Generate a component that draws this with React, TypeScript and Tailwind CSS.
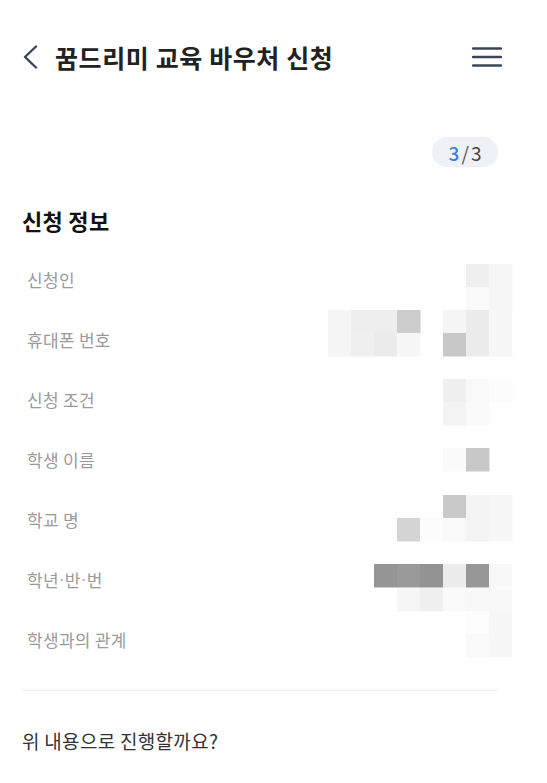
import React from "react"

const font = { fontFamily: '"Noto Sans CJK KR", "Noto Sans", sans-serif' }

const labels = ["신청인", "휴대폰 번호", "신청 조건", "학생 이름", "학교 명", "학년·반·번", "학생과의 관계"]

// redaction mosaic: [y, column, colour]
const cols = [328, 351, 374, 397, 420, 443, 466, 489]
const mosaic: [number, number, string][] = [
  [264, 6, "#efefef"], [264, 7, "#f6f6f6"],
  [287, 6, "#f9f9f9"], [287, 7, "#f6f6f6"],
  [310, 0, "#f5f5f5"], [310, 1, "#eeeeee"], [310, 2, "#eeeeee"], [310, 3, "#cccccc"], [310, 5, "#f5f5f5"], [310, 6, "#ececec"], [310, 7, "#f7f7f7"],
  [333, 0, "#f5f5f5"], [333, 1, "#efefef"], [333, 2, "#ebebeb"], [333, 3, "#f7f7f7"], [333, 5, "#c8c8c8"], [333, 6, "#ececec"], [333, 7, "#f7f7f7"],
  [379, 5, "#efefef"], [379, 6, "#f9f9f9"], [379, 7, "#fcfcfc"],
  [402, 5, "#f3f3f3"], [402, 6, "#fafafa"],
  [448, 5, "#fafafa"], [448, 6, "#c8c8c8"],
  [495, 5, "#c9c9c9"], [495, 6, "#f4f4f4"], [495, 7, "#f6f6f6"],
  [518, 3, "#d4d4d4"], [518, 4, "#fcfcfc"], [518, 5, "#f9f9f9"], [518, 6, "#f4f4f4"], [518, 7, "#f6f6f6"],
  [564, 2, "#959595"], [564, 3, "#9a9a9a"], [564, 4, "#939393"], [564, 5, "#ececec"], [564, 6, "#979797"], [564, 7, "#f8f8f8"],
  [588, 3, "#f6f6f6"], [588, 4, "#f0f0f0"], [588, 5, "#f9f9f9"], [588, 6, "#f8f8f8"], [588, 7, "#f8f8f8"],
  [611, 6, "#fdfdfd"], [611, 7, "#f7f7f7"],
  [634, 6, "#f9f9f9"], [634, 7, "#f7f7f7"],
]

function Mosaic() {
  return (
    <svg className="pointer-events-none absolute left-0 top-0" width={547} height={783}>
      {mosaic.map(([y, c, fill], i) => (
        <rect key={i} x={cols[c]} y={y} width={23.5} height={23.5} fill={fill} />
      ))}
    </svg>
  )
}

function Label({ text }: { text: string }) {
  const parts = text.split("·")
  return (
    <>
      {parts.map((p, i) => (
        <React.Fragment key={i}>
          {i > 0 && <span className="font-['Liberation_Sans']">·</span>}
          {p}
        </React.Fragment>
      ))}
    </>
  )
}

export default function App() {
  return (
    <div className="relative min-h-[783px] w-[547px] overflow-hidden bg-white" style={font}>
      {/* Header */}
      <header className="flex h-[114px] items-center justify-between pl-[22px] pr-[45px]">
        <div className="flex items-center gap-[17px]">
          <svg width="16" height="24" viewBox="0 0 16 24" fill="none">
            <path d="M14 1.5 L3 12 L14 22.5" stroke="#3a4255" strokeWidth="2.4" strokeLinecap="round" strokeLinejoin="round" />
          </svg>
          <h1 className="text-[25px] font-bold leading-[32px] tracking-[0.6px] text-[#222]">꿈드리미 교육 바우처 신청</h1>
        </div>
        <svg width="30" height="22" viewBox="0 0 30 22" fill="none">
          <path d="M1 2.5 H29 M1 11 H29 M1 19.5 H29" stroke="#3c4558" strokeWidth="2.4" strokeLinecap="round" />
        </svg>
      </header>

      <main className="pl-[22px] pr-[49px]">
        <div className="mt-[23px] flex justify-end">
          <span className="flex h-[30px] w-[66px] items-center justify-center rounded-full bg-[#eef1f6] text-[19px] leading-none">
            <span className="font-medium text-[#3b7de0]">3</span>
            <span className="mx-[2px] text-[#555]">/</span>
            <span className="text-[#444]">3</span>
          </span>
        </div>

        <h2 className="mt-[38px] text-[22px] font-bold leading-[30px] tracking-[0.3px] text-[#111]">신청 정보</h2>

        <ul className="mt-[15px]">
          {labels.map((label) => (
            <li key={label} className="flex h-[60px] items-center pl-[5px] text-[17px] tracking-[0.3px] text-[#9a9a9a]">
              <Label text={label} />
            </li>
          ))}
        </ul>

        <div className="mt-[20px] h-px bg-[#eeeeee]" />

        <p className="mt-[36px] text-[19px] leading-[28px] tracking-[0.3px] text-[#333]">위 내용으로 진행할까요?</p>
      </main>

      <Mosaic />
    </div>
  )
}
